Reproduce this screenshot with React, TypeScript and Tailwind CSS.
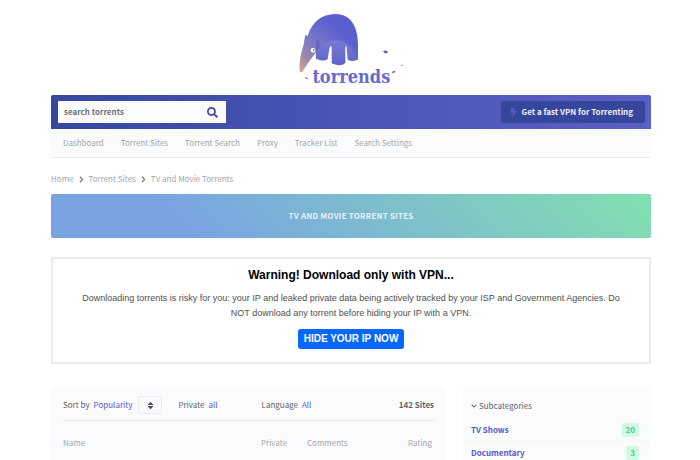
import React from 'react';
import { FaBolt, FaChevronDown, FaChevronRight, FaSearch, FaSort } from 'react-icons/fa';

const navItems = ['Dashboard', 'Torrent Sites', 'Torrent Search', 'Proxy', 'Tracker List', 'Search Settings'];

const subcategories = [
  { name: 'TV Shows', count: 20 },
  { name: 'Documentary', count: 3 },
];

function Logo() {
  return (
    <svg viewBox="0 0 420 285" className="h-[95px] w-[140px]" role="img" aria-label="torrends">
      <defs>
        <linearGradient id="body" gradientUnits="userSpaceOnUse" x1="58" y1="217" x2="170" y2="85">
          <stop offset="0" stopColor="#d8aa8c" />
          <stop offset="0.25" stopColor="#9c8aa8" />
          <stop offset="0.6" stopColor="#7475cb" />
          <stop offset="1" stopColor="#5a5ecf" />
        </linearGradient>
        <linearGradient id="leg" x1="0" y1="0" x2="0" y2="1">
          <stop offset="0" stopColor="#7b80d8" />
          <stop offset="1" stopColor="#5e63c9" />
        </linearGradient>
      </defs>
      {/* legs */}
      <path
        d="M104 120 L225 110 L231 178 Q216 187 200 179 L197 140 Q192 136 193 150 L193 189 Q180 202 152 190 L152 142 Q147 134 145 148 L140 177 Q130 187 105 176 Z"
        fill="url(#leg)"
      />
      {/* back and head */}
      <path
        d="M57 215 C53 196 57 170 65 145 C70 130 69 116 74 104 L80 108 C92 66 124 41 165 42 C211 43 231 83 231 134 L231 178 L219 182 C220 156 208 128 176 122 C146 117 120 134 107 154 C92 174 75 197 64 216 Q59 219 57 215 Z"
        fill="url(#body)"
      />
      <path d="M104 154 L107 112 L119 138 Z" fill="#6266c5" />
      <circle cx="96" cy="151" r="7" fill="#fff" />
      <circle cx="98" cy="150" r="3" fill="#8587c9" />
      <path d="M306 154 L314 151 L322 157 L313 161 Z M332 216 L340 212 L343 216 L335 220 Z M71 231 L81 235 L76 238 Z" fill="#6063cf" />
      <path d="M359 194 L369 196 L362 199 Z" fill="#8e91da" />
      <text x="211" y="248" textAnchor="middle" fontFamily="'DejaVu Serif Condensed', 'DejaVu Serif', serif" fontWeight="700" fontSize="54" fill="#686bce">
        torrends
      </text>
    </svg>
  );
}

export default function App() {
  return (
    <div className="min-h-screen bg-white pr-[49px] pl-[51px] font-['Noto_Sans_CJK_SC',sans-serif] text-[8px] leading-4 text-[#a5a5a8]">
      <header>
        <div className="flex justify-center">
          <Logo />
        </div>

        <div className="flex items-center justify-between rounded-t-xs bg-linear-to-r from-[#36479d] via-[#4a55b6] to-[#5a60c6] py-1.5 pr-1.5 pl-[7px]">
          <form className="flex h-[22px] w-[168px] items-center bg-[#fafbfd] px-1.5" onSubmit={(e) => e.preventDefault()}>
            <input
              type="text"
              aria-label="search torrents"
              placeholder="search torrents"
              className="min-w-0 flex-1 bg-transparent font-bold text-[#747476] outline-none placeholder:text-[#747476]"
            />
            <button type="submit" aria-label="Search" className="mr-0.5 text-[#4548a8]">
              <FaSearch size={11} />
            </button>
          </form>
          <a href="#vpn" className="flex h-[22px] items-center gap-1 rounded-xs bg-[#36479b] pr-3 pl-2 font-bold text-[#eff0fb]">
            <FaBolt size={9} className="text-[#5659c7]" />
            Get a fast VPN for Torrenting
          </a>
        </div>

        <nav className="flex h-[29px] items-center gap-[17px] border-b border-[#e9edf3] bg-[#fafbfd] px-3">
          {navItems.map((item) => (
            <a key={item} href="#nav">{item}</a>
          ))}
        </nav>
      </header>

      {/* Breadcrumbs */}
      <nav aria-label="Breadcrumb" className="mt-[13px] flex items-center gap-1">
        <a href="#home">Home</a>
        <FaChevronRight size={7} className="text-[#77777b]" />
        <a href="#sites">Torrent Sites</a>
        <FaChevronRight size={7} className="text-[#77777b]" />
        <a href="#tv">TV and Movie Torrents</a>
      </nav>

      <h1 className="mt-[7px] flex h-11 items-center justify-center rounded-xs bg-linear-[45deg] from-[#7aa3e3] from-22% to-[#81e0af] font-bold tracking-wide text-[#e6f2f8]">
        TV AND MOVIE TORRENT SITES
      </h1>

      {/* VPN warning */}
      <section className="mt-[19px] border-2 border-[#e9ebed] px-5 pt-2 pb-[13px] text-center font-['Liberation_Sans',sans-serif]">
        <h2 className="text-xs font-bold text-black">Warning! Download only with VPN...</h2>
        <p className="mt-2 text-[9px] leading-[15px] text-[#505050]">
          Downloading torrents is risky for you: your IP and leaked private data being actively tracked by your ISP and Government Agencies. Do NOT download any torrent before hiding your IP with a VPN.
        </p>
        <a href="#hide" className="mt-2 inline-block rounded-[3px] bg-[#0468ff] px-1.5 py-0.5 text-[10px] font-bold text-white">
          HIDE YOUR IP NOW
        </a>
      </section>

      <main className="mt-6 flex gap-[18px]">
        <section className="min-w-0 flex-1 rounded-t-xs bg-[#fafbfd] pt-2 pr-[11px] pb-2 pl-3">
          <div className="flex items-center border-b border-[#e6e8ec] pb-1.5 text-[#626266]">
            <span>Sort by</span>
            <a href="#sort" className="ml-1 text-[#5759cb]">Popularity</a>
            <button type="button" aria-label="Change sort order" className="ml-1.5 flex h-[18px] w-6 items-center justify-center rounded-xs border border-[#eaecf1] text-[#4b4c54]">
              <FaSort size={9} />
            </button>
            <span className="ml-4">Private</span>
            <a href="#private" className="ml-1 text-[#5759cb]">all</a>
            <span className="ml-11">Language</span>
            <a href="#language" className="ml-1 text-[#5759cb]">All</a>
            <strong className="ml-auto font-bold">142 Sites</strong>
          </div>
          <table className="mt-3.5 w-full table-fixed text-left">
            <thead>
              <tr>
                <th className="font-normal">Name</th>
                <th className="w-[46px] font-normal">Private</th>
                <th className="w-[67px] font-normal">Comments</th>
                <th className="w-[60px] pr-0.5 text-right font-normal">Rating</th>
              </tr>
            </thead>
          </table>
        </section>

        <aside className="w-[188px] rounded-t-xs bg-[#fafbfd] pt-2">
          <h2 className="flex items-center gap-0.5 px-2 py-0.5 text-[#626266]">
            <FaChevronDown size={6} />
            Subcategories
          </h2>
          <ul className="mt-[3px]">
            {subcategories.map((cat) => (
              <li key={cat.name} className="flex h-[23px] items-center justify-between border-b border-[#f2f4f8] pr-3 pl-2 font-bold">
                <a href="#cat" className="text-[#5759cb]">{cat.name}</a>
                <span className="rounded-xs bg-[#d2f9e4] px-1 leading-[14px] text-[#48cd8b]">{cat.count}</span>
              </li>
            ))}
          </ul>
        </aside>
      </main>
    </div>
  );
}
